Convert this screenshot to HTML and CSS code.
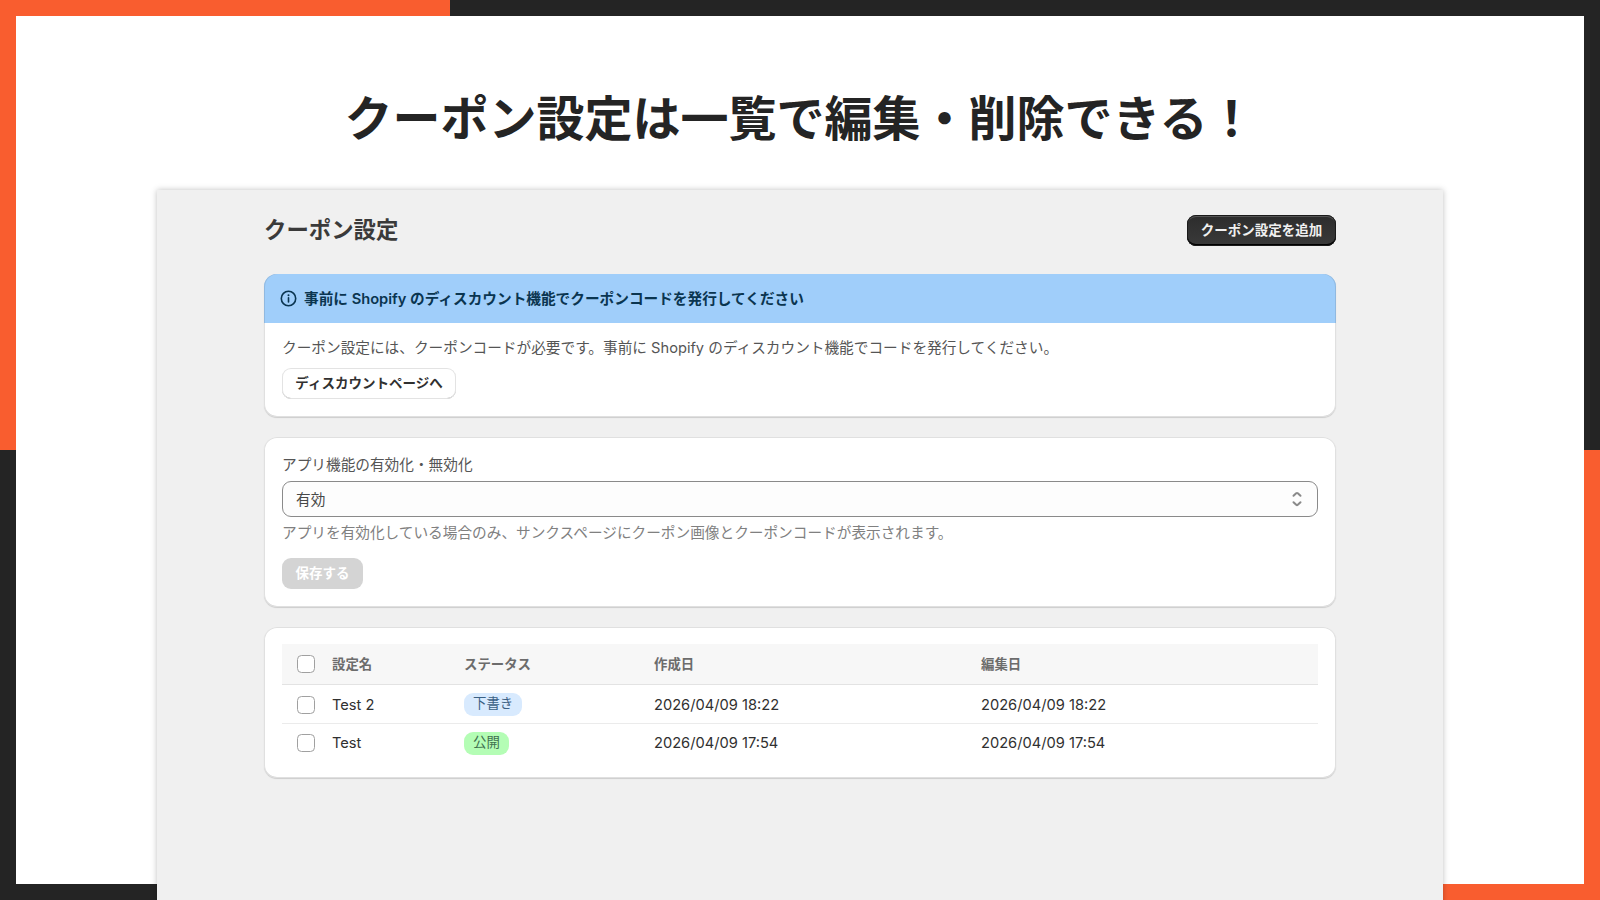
FILE: index.html
```html
<!DOCTYPE html>
<html lang="ja">
<head>
    <meta charset="UTF-8">
    <meta name="viewport" content="width=device-width, initial-scale=1.0">
    <title>クーポン設定</title>
    <link rel="stylesheet" href="styles.css">
</head>
<body>
    <div class="slide">
        <h1 class="slide-title">クーポン設定は一覧で編集・削除できる！</h1>
        <div class="panel">
            <div class="page-header">
                <h2 class="page-title">クーポン設定</h2>
                <button class="btn btn-primary">クーポン設定を追加</button>
            </div>

            <div class="card banner">
                <div class="banner-header">
                    <svg class="banner-icon" width="17" height="17" viewBox="0 0 17 17">
                        <circle cx="8.5" cy="8.5" r="7.2" fill="none" stroke="currentColor" stroke-width="1.6"/>
                        <circle cx="8.5" cy="5.3" r="1" fill="currentColor"/>
                        <path d="M8.5 7.8v4.2" stroke="currentColor" stroke-width="1.6" stroke-linecap="round"/>
                    </svg>
                    <span class="banner-title">事前に Shopify のディスカウント機能でクーポンコードを発行してください</span>
                </div>
                <div class="banner-body">
                    <p class="text">クーポン設定には、クーポンコードが必要です。事前に Shopify のディスカウント機能でコードを発行してください。</p>
                    <button class="btn btn-secondary">ディスカウントページへ</button>
                </div>
            </div>

            <div class="card form-card">
                <div class="text">アプリ機能の有効化・無効化</div>
                <div class="select">
                    <span>有効</span>
                    <svg width="10" height="16" viewBox="0 0 10 16" fill="none" stroke="#8a8a8a" stroke-width="2" stroke-linecap="round" stroke-linejoin="round">
                        <path d="M1.5 4.8 4.2 2.2q.8-.6 1.6 0L8.5 4.8"/>
                        <path d="M1.5 11.2l2.7 2.6q.8.6 1.6 0L8.5 11.2"/>
                    </svg>
                </div>
                <div class="text help">アプリを有効化している場合のみ、サンクスページにクーポン画像とクーポンコードが表示されます。</div>
                <button class="btn btn-disabled" disabled>保存する</button>
            </div>

            <div class="card table-card">
                <table class="table">
                    <colgroup>
                        <col class="col-check">
                        <col class="col-name">
                        <col class="col-status">
                        <col class="col-created">
                        <col>
                    </colgroup>
                    <thead>
                        <tr>
                            <th><span class="checkbox"></span></th>
                            <th>設定名</th>
                            <th>ステータス</th>
                            <th>作成日</th>
                            <th>編集日</th>
                        </tr>
                    </thead>
                    <tbody>
                        <tr>
                            <td><span class="checkbox"></span></td>
                            <td>Test 2</td>
                            <td><span class="badge badge-draft">下書き</span></td>
                            <td>2026/04/09 18:22</td>
                            <td>2026/04/09 18:22</td>
                        </tr>
                        <tr>
                            <td><span class="checkbox"></span></td>
                            <td>Test</td>
                            <td><span class="badge badge-public">公開</span></td>
                            <td>2026/04/09 17:54</td>
                            <td>2026/04/09 17:54</td>
                        </tr>
                    </tbody>
                </table>
            </div>
        </div>
    </div>
</body>
</html>
```
FILE: styles.css
```css
* {
    box-sizing: border-box;
}
body {
    margin: 0;
    font-family: 'Inter', 'Noto Sans CJK JP', sans-serif;
    font-size: 14.67px;
    color: #303030;
}
h1, h2, p {
    margin: 0;
}

/* two-tone frame around the slide */
.slide {
    width: 1600px;
    height: 900px;
    padding: 16px;
    overflow: hidden;
    display: flex;
    flex-direction: column;
    align-items: center;
    background:
        linear-gradient(#fff, #fff) center / 1568px 868px no-repeat,
        linear-gradient(#f95d2f, #f95d2f) left top / 450px 450px no-repeat,
        linear-gradient(#f95d2f, #f95d2f) right bottom / 450px 450px no-repeat,
        #242424;
}
.slide-title {
    flex: none;
    height: 174px;
    padding-top: 64px;
    font-family: 'Noto Sans CJK JP', sans-serif;
    font-size: 48px;
    line-height: 70px;
    font-weight: 700;
    color: #242424;
    white-space: nowrap;
}
.panel {
    flex: none;
    width: 1286px;
    height: 730px;
    padding: 25px 107px 0;
    background-color: #f0f0f0;
    box-shadow: 0 0 6px rgba(0, 0, 0, 0.25);
}
.page-header {
    display: flex;
    align-items: center;
    justify-content: space-between;
    height: 31px;
    margin-bottom: 28px;
}
.page-title {
    padding-bottom: 2px;
    font-size: 22.4px;
    line-height: 31px;
    font-weight: 700;
    color: #3a3a3a;
}

.btn {
    display: block;
    height: 31px;
    padding: 0 13px 1px;
    border: 0;
    border-radius: 9px;
    font-family: inherit;
    font-size: 13.5px;
    line-height: 28px;
    font-weight: 600;
    color: #303030;
    white-space: nowrap;
}
.btn-primary {
    width: 149px;
    color: #f0f0f0;
    background: linear-gradient(#2c2c2c, #3a3a3a);
    box-shadow: inset 0 0 0 1px #1a1a1a, inset 0 -2px 0 #000, inset 0 2px 0 #555;
}
.btn-secondary {
    width: 174px;
    background-color: #fff;
    box-shadow: inset 0 0 0 1px #e3e3e3, inset 0 -1px 0 #b5b5b5;
}
.btn-disabled {
    width: 81px;
    color: #fff;
    background-color: #d4d4d4;
}

.card {
    margin-bottom: 20px;
    border-radius: 13px;
    background-color: #fff;
    box-shadow: 0 1px 1px rgba(0, 0, 0, 0.15), inset 0 0 0 1px #e0e0e0, inset 0 -1px 0 #ccc;
}
.text {
    line-height: 22px;
    color: #555;
    white-space: nowrap;
}

.banner {
    height: 143px;
}
.banner-header {
    display: flex;
    align-items: center;
    gap: 7px;
    height: 49px;
    padding-left: 16px;
    border-radius: 13px 13px 0 0;
    color: #0a3550;
    background-color: #a0cefa;
    box-shadow: inset 1px 0 0 #91b9e0, inset -1px 0 0 #91b9e0;
}
.banner-title {
    padding-bottom: 2px;
    font-weight: 600;
}
.banner-body {
    padding: 14px 18px 0;
}
.banner-body .text {
    margin-bottom: 9px;
}

.form-card {
    height: 170px;
    padding: 17px 18px;
}
.select {
    display: flex;
    align-items: center;
    justify-content: space-between;
    height: 36px;
    margin: 5px 0;
    padding: 0 15px 0 13px;
    border: 1px solid #8a8a8a;
    border-radius: 9px;
    background-color: #fdfdfd;
    color: #484848;
}
.select span {
    padding-bottom: 2px;
}
.help {
    margin-bottom: 14px;
    color: #808080;
}

.table-card {
    height: 151px;
    padding: 17px 18px;
}
.table {
    width: 100%;
    border-collapse: separate;
    border-spacing: 0;
    table-layout: fixed;
}
.col-check {
    width: 50px;
}
.col-name {
    width: 132px;
}
.col-status {
    width: 190px;
}
.col-created {
    width: 327px;
}
.table th, .table td {
    height: 38px;
    padding: 0;
    text-align: left;
    vertical-align: middle;
    line-height: 22px;
}
.table th {
    height: 41px;
    padding-bottom: 1px;
    border-bottom: 1px solid #e3e3e3;
    font-size: 13.4px;
    font-weight: 600;
    color: #6c6c6c;
    background-color: #f7f7f7;
}
.table tbody tr:first-child td {
    height: 39px;
    padding-top: 1px;
    border-bottom: 1px solid #ebebeb;
}
.checkbox {
    display: block;
    width: 18px;
    height: 18px;
    margin-left: 15px;
    border: 1px solid #a0a0a0;
    border-radius: 4.5px;
    background-color: #fff;
}
.badge {
    display: block;
    width: max-content;
    height: 23px;
    padding: 0 9px;
    border-radius: 9px;
    font-size: 13.4px;
    line-height: 20px;
}
.badge-draft {
    color: #3a6084;
    background-color: #d8eafe;
}
.badge-public {
    color: #40704f;
    background-color: #b4fdb5;
}
```
